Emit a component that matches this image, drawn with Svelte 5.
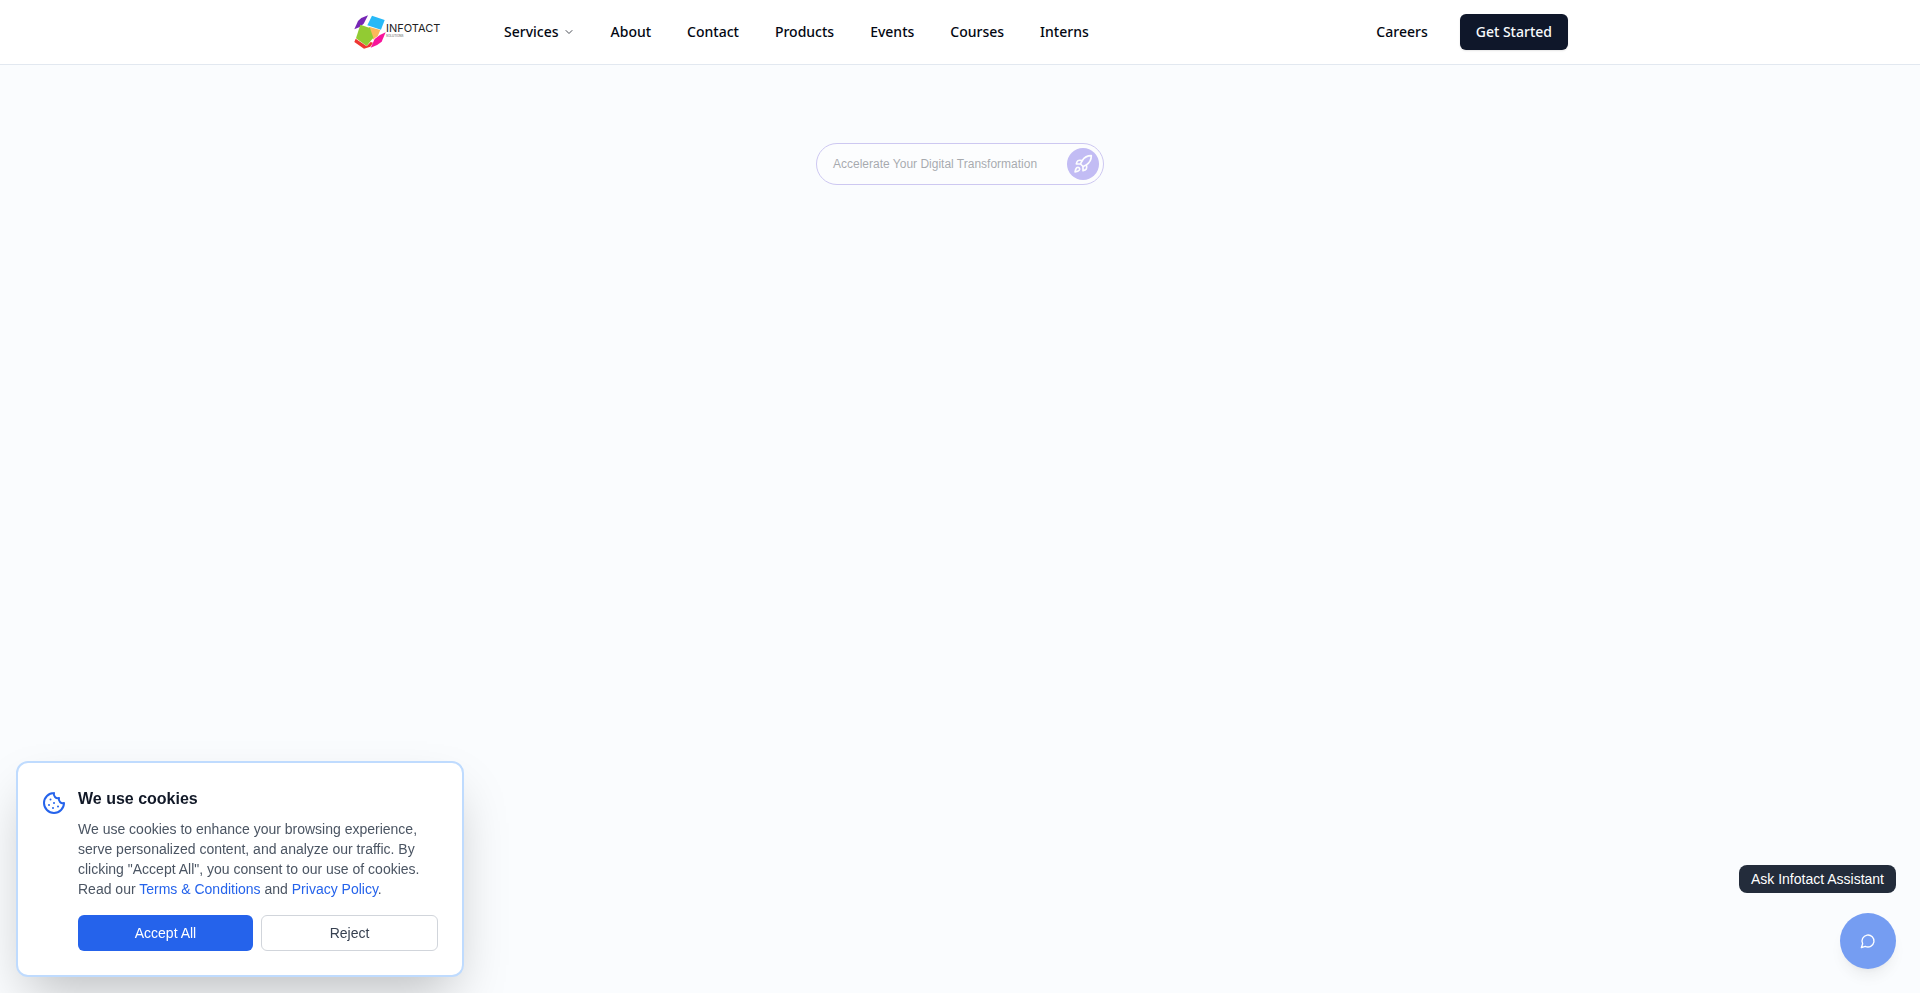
<script lang="ts">
    type NavLink = { label: string; href: string };

    const links: NavLink[] = [
        { label: 'About', href: '/about' },
        { label: 'Contact', href: '/contact' },
        { label: 'Products', href: '/products' },
        { label: 'Events', href: '/events' },
        { label: 'Courses', href: '/courses' },
        { label: 'Interns', href: '/interns' },
    ];

    let showCookies = $state(true);
</script>

<div class="page">
    <header class="site-header">
        <div class="header-inner">
            <a class="logo" href="/" aria-label="Infotact Solutions">
                <svg class="logo-mark" viewBox="12 12 96 102" aria-hidden="true">
                    <path d="M13 55 L24 30 Q36 18 54 13 L41 38 Q30 50 13 55Z" fill="#7626b5" />
                    <path d="M66 14 L104 27 L93 56 L52 43Z" fill="#27b9f7" />
                    <path d="M56 47 L91 57 L83 76 Q74 81 69 86 L61 60Z" fill="#fdb85a" />
                    <path d="M31 41 L60 51 L70 80 L50 105 L18 82Z" fill="#92cb33" />
                    <path d="M17 83 L50 106 L62 93 L69 95 L61 107 L42 113 L13 93Z" fill="#ee3632" />
                    <path d="M107 64 L95 92 Q82 104 62 110 L74 84 Q86 72 107 64Z" fill="#f7149b" />
                </svg>
                <span class="logo-text">
                    <span class="logo-name">INFOTACT</span>
                    <span class="logo-sub">SOLUTIONS</span>
                </span>
            </a>

            <nav class="nav" aria-label="Main">
                <button class="nav-item" type="button" aria-haspopup="true">
                    Services
                    <svg class="chevron" viewBox="0 0 24 24" aria-hidden="true"><path d="m6 9 6 6 6-6" /></svg>
                </button>
                {#each links as link (link.href)}
                    <a class="nav-item" href={link.href}>{link.label}</a>
                {/each}
            </nav>

            <div class="actions">
                <a class="nav-item" href="/careers">Careers</a>
                <a class="btn-start" href="/get-started">Get Started</a>
            </div>
        </div>
    </header>

    <main class="hero">
        <a class="pill" href="/services">
            <span>Accelerate Your Digital Transformation</span>
            <span class="pill-icon">
                <svg viewBox="0 0 24 24" aria-hidden="true">
                    <path d="M4.5 16.5c-1.5 1.26-2 5-2 5s3.74-.5 5-2c.71-.84.7-2.13-.09-2.91a2.18 2.18 0 0 0-2.91-.09z" />
                    <path d="m12 15-3-3a22 22 0 0 1 2-3.95A12.88 12.88 0 0 1 22 2c0 2.72-.78 7.5-6 11a22.35 22.35 0 0 1-4 2z" />
                    <path d="M9 12H4s.55-3.03 2-4c1.62-1.08 5 0 5 0" />
                    <path d="M12 15v5s3.03-.55 4-2c1.08-1.62 0-5 0-5" />
                </svg>
            </span>
        </a>
    </main>

    {#if showCookies}
        <section class="cookies" aria-labelledby="cookies-title">
            <svg class="cookie-icon" viewBox="0 0 24 24" aria-hidden="true">
                <path d="M12 2a10 10 0 1 0 10 10 4 4 0 0 1-5-5 4 4 0 0 1-5-5" />
                <path d="M8.5 8.5v.01" />
                <path d="M16 15.5v.01" />
                <path d="M12 12v.01" />
                <path d="M11 17v.01" />
                <path d="M7 14v.01" />
            </svg>
            <div class="cookie-body">
                <h2 id="cookies-title">We use cookies</h2>
                <p>
                    We use cookies to enhance your browsing experience, serve personalized content, and analyze our
                    traffic. By clicking "Accept All", you consent to our use of cookies. Read our
                    <a href="/terms">Terms &amp; Conditions</a> and <a href="/privacy">Privacy Policy</a>.
                </p>
                <div class="cookie-actions">
                    <button class="btn-accept" type="button" onclick={() => { showCookies = false; }}>Accept All</button>
                    <button class="btn-reject" type="button" onclick={() => { showCookies = false; }}>Reject</button>
                </div>
            </div>
        </section>
    {/if}

    <div class="assistant">
        <span class="assistant-tip" id="assistant-tip">Ask Infotact Assistant</span>
        <button class="assistant-btn" type="button" aria-labelledby="assistant-tip">
            <svg viewBox="0 0 24 24" aria-hidden="true"><path d="M7.9 20A9 9 0 1 0 4 16.1L2 22Z" /></svg>
        </button>
    </div>
</div>

<style>
    :global(body) { margin: 0; background: #fafcfe; }

    .page {
        min-height: 100vh; background: #fafcfe; color: #030712;
        font-family: "Liberation Sans", Arial, sans-serif;
    }
    .page, .page * { box-sizing: border-box; }
    a { color: inherit; text-decoration: none; }
    button { font: inherit; cursor: pointer; }
    svg { fill: none; stroke-linecap: round; stroke-linejoin: round; flex-shrink: 0; }

    .site-header {
        background: #fff; border-bottom: 1px solid #e2e8f0;
        font-family: system-ui, "Noto Sans", sans-serif; font-size: 14px; font-weight: 500; line-height: 20px;
    }
    .header-inner {
        display: flex; align-items: center; height: 64px;
        max-width: 1280px; margin: 0 auto; padding: 0 32px;
    }

    .logo { display: flex; align-items: center; width: 88px; margin-right: 48px; padding-left: 2px; }
    .logo-mark { width: 32px; height: 34px; }
    .logo-text {
        display: flex; flex-direction: column; padding-bottom: 4px;
        font-family: Inter, sans-serif; color: #222;
    }
    .logo-name { font-size: 11px; font-weight: 400; line-height: 12px; }
    .logo-sub { font-size: 3px; font-weight: 400; line-height: 4px; color: #555; }

    .nav { display: flex; align-items: center; gap: 4px; flex: 1; }
    .nav-item {
        display: inline-flex; align-items: center; gap: 4px;
        padding: 8px 16px; border: none; background: none; color: #030712;
    }
    .chevron { width: 12px; height: 12px; stroke: #4b4f57; stroke-width: 2; }

    .actions { display: flex; align-items: center; gap: 16px; }
    .btn-start {
        padding: 8px 16px; border-radius: 6px;
        background: #0f172a; color: #f8fafc;
        box-shadow: 0 1px 2px rgba(0, 0, 0, 0.1);
    }

    .hero { display: flex; justify-content: center; padding: 78px 32px; }
    .pill {
        display: flex; align-items: center; justify-content: space-between;
        width: 288px; padding: 4px 4px 4px 16px;
        border: 1px solid #8b7be0; border-radius: 99px; background: #fff;
        font-size: 12px; line-height: 16px; color: #2b2f38; opacity: 0.4;
    }
    .pill-icon {
        display: flex; align-items: center; justify-content: center;
        width: 32px; height: 32px; border-radius: 50%; background: #705de6;
    }
    .pill-icon svg { width: 20px; height: 20px; stroke: #fff; stroke-width: 2; }

    .cookies {
        position: fixed; left: 16px; bottom: 16px;
        display: flex; align-items: flex-start; gap: 12px;
        width: 448px; max-width: calc(100% - 32px); padding: 24px;
        background: #fff; border: 2px solid #bfdbfe; border-radius: 12px;
        box-shadow: 0 25px 50px -12px rgba(0, 0, 0, 0.25);
        font-size: 14px; line-height: 20px;
    }
    .cookie-icon { width: 24px; height: 24px; margin-top: 4px; stroke: #2563eb; stroke-width: 2; }
    .cookie-body { flex: 1; }
    .cookie-body h2 { margin: 0 0 8px; font-size: 16px; line-height: 24px; font-weight: 700; color: #111827; }
    .cookie-body p { margin: 0 0 16px; color: #4b5563; }
    .cookie-body p a { color: #2563eb; }
    .cookie-actions { display: flex; gap: 8px; }
    .cookie-actions button { flex: 1; padding: 8px 16px; border-radius: 6px; }
    .btn-accept { border: none; background: #2563eb; color: #fff; }
    .cookie-actions .btn-reject { padding: 7px 16px; border: 1px solid #d1d5db; background: #fff; color: #374151; }

    .assistant {
        position: fixed; right: 24px; bottom: 24px;
        display: flex; flex-direction: column; align-items: flex-end; gap: 20px;
    }
    .assistant-tip {
        padding: 4px 12px; border-radius: 8px;
        background: #232c3b; color: #fff; font-size: 14px; line-height: 20px;
    }
    .assistant-btn {
        display: flex; align-items: center; justify-content: center;
        width: 56px; height: 56px; padding: 0; border: none; border-radius: 50%;
        background: #2563eb; opacity: 0.62;
        box-shadow: 0 10px 15px -3px rgba(0, 0, 0, 0.1), 0 4px 6px -4px rgba(0, 0, 0, 0.1);
    }
    .assistant-btn svg { width: 16px; height: 16px; stroke: #fff; stroke-width: 2; }

    @media (max-width: 1100px) {
        .header-inner { height: auto; flex-wrap: wrap; padding: 8px 16px; }
        .nav { flex-wrap: wrap; }
    }
</style>
